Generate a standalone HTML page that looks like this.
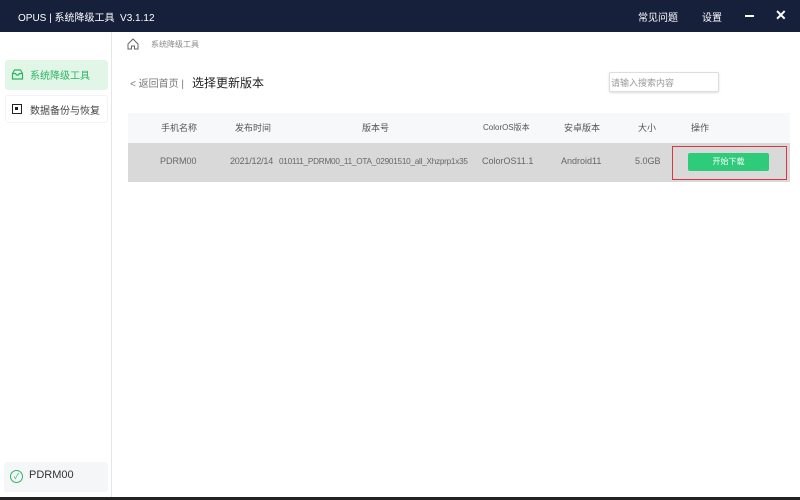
<!DOCTYPE html>
<html><head><meta charset="utf-8"><style>
*{margin:0;padding:0;box-sizing:border-box}
body{width:800px;height:500px;overflow:hidden;background:#fff;font-family:"Liberation Sans","Noto Sans CJK SC",sans-serif;position:relative;color:#333}
.abs{position:absolute}
.top{left:0;top:0;width:800px;height:32px;background:#16203a;color:#fff;font-size:10px}
.side{left:0;top:32px;width:112px;height:465px;border-right:1px solid #e6e6e6}
.t{font-size:9px;color:#555;white-space:nowrap}
</style></head><body>
<div class="abs top">
<div class="abs" style="left:18px;top:9px">OPUS | 系统降级工具 &nbsp;V3.1.12</div>
<div class="abs" style="left:638px;top:9px">常见问题</div>
<div class="abs" style="left:702px;top:9px">设置</div>
<div class="abs" style="left:745px;top:15px;width:9px;height:2px;background:#fff"></div>
<div class="abs" style="left:775px;top:7px;font-size:14px;font-weight:bold">✕</div>
</div>
<div class="abs side">
<div class="abs" style="left:5px;top:28px;width:103px;height:30px;background:#e2f6e8;border-radius:3px"></div>
<svg class="abs" style="left:11px;top:37px" width="13" height="11" viewBox="0 0 13 11"><path d="M1.5 4.5 L3.5 1 H9.5 L11.5 4.5 V10 H1.5 Z M1.5 4.5 H4.5 L5.5 6 H7.5 L8.5 4.5 H11.5" fill="none" stroke="#2bb462" stroke-width="1.2"/></svg>
<div class="abs t" style="left:30px;top:35px;font-size:10px;color:#2bb462">系统降级工具</div>
<div class="abs" style="left:5px;top:63px;width:103px;height:28px;border:1px solid #f3f3f3;border-radius:3px"></div>
<div class="abs" style="left:12px;top:72px;width:10px;height:10px;border:1.5px solid #222"><div style="width:3px;height:3px;background:#222;margin:2px"></div></div>
<div class="abs t" style="left:30px;top:70px;font-size:10px;color:#444">数据备份与恢复</div>
<div class="abs" style="left:4px;top:430px;width:104px;height:30px;background:#f5f6f8;border-radius:3px"></div>
<div class="abs" style="left:10px;top:438px;width:13px;height:13px;border:1.3px solid #2bb462;border-radius:50%;color:#2bb462;font-size:8px;text-align:center;line-height:11px">✓</div>
<div class="abs t" style="left:29px;top:437px;font-size:11px;color:#333">PDRM00</div>
</div>
<svg class="abs" style="left:127px;top:38px" width="12" height="12" viewBox="0 0 12 12"><path d="M1 6 L6 1 L11 6 V11 H7.5 V8 H4.5 V11 H1 Z" fill="none" stroke="#666" stroke-width="1"/></svg>
<div class="abs t" style="left:151px;top:39px;font-size:8px;color:#888">系统降级工具</div>
<div class="abs t" style="left:130px;top:75px;font-size:10px;color:#777">&lt; 返回首页 |</div>
<div class="abs t" style="left:192px;top:74px;font-size:12px;color:#222">选择更新版本</div>
<div class="abs" style="left:609px;top:72px;width:110px;height:20px;border:1px solid #ddd;border-radius:2px;box-shadow:0 1px 2px #ddd"></div>
<div class="abs t" style="left:611px;top:76px;font-size:9px;color:#999">请输入搜索内容</div>
<div class="abs" style="left:128px;top:113px;width:662px;height:30px;background:#f7f8fa"></div>
<div class="abs" style="left:128px;top:143px;width:662px;height:39px;background:#d9d9d9"></div>
<div class="abs t" style="left:161px;top:121px">手机名称</div>
<div class="abs t" style="left:235px;top:121px">发布时间</div>
<div class="abs t" style="left:362px;top:121px">版本号</div>
<div class="abs t" style="left:483px;top:122px;font-size:8px">ColorOS版本</div>
<div class="abs t" style="left:564px;top:121px">安卓版本</div>
<div class="abs t" style="left:638px;top:121px">大小</div>
<div class="abs t" style="left:691px;top:121px">操作</div>
<div class="abs t" style="left:160px;top:156px;color:#666">PDRM00</div>
<div class="abs t" style="left:230px;top:156px;color:#666;letter-spacing:-0.2px">2021/12/14</div>
<div class="abs t" style="left:279px;top:157px;color:#666;font-size:8.2px;letter-spacing:-0.25px">010111_PDRM00_11_OTA_02901510_all_Xhzprp1x35</div>
<div class="abs t" style="left:482px;top:156px;color:#666">ColorOS11.1</div>
<div class="abs t" style="left:561px;top:156px;color:#666">Android11</div>
<div class="abs t" style="left:635px;top:156px;color:#666">5.0GB</div>
<div class="abs" style="left:672px;top:146px;width:115px;height:34px;border:1.5px solid #d9363e"></div>
<div class="abs" style="left:688px;top:153px;width:81px;height:18px;background:#2ecc7a;border-radius:2px;color:#fff;font-size:8px;text-align:center;line-height:18px">开始下载</div>
<div class="abs" style="left:0;top:497px;width:800px;height:3px;background:#222"></div>
</body></html>
